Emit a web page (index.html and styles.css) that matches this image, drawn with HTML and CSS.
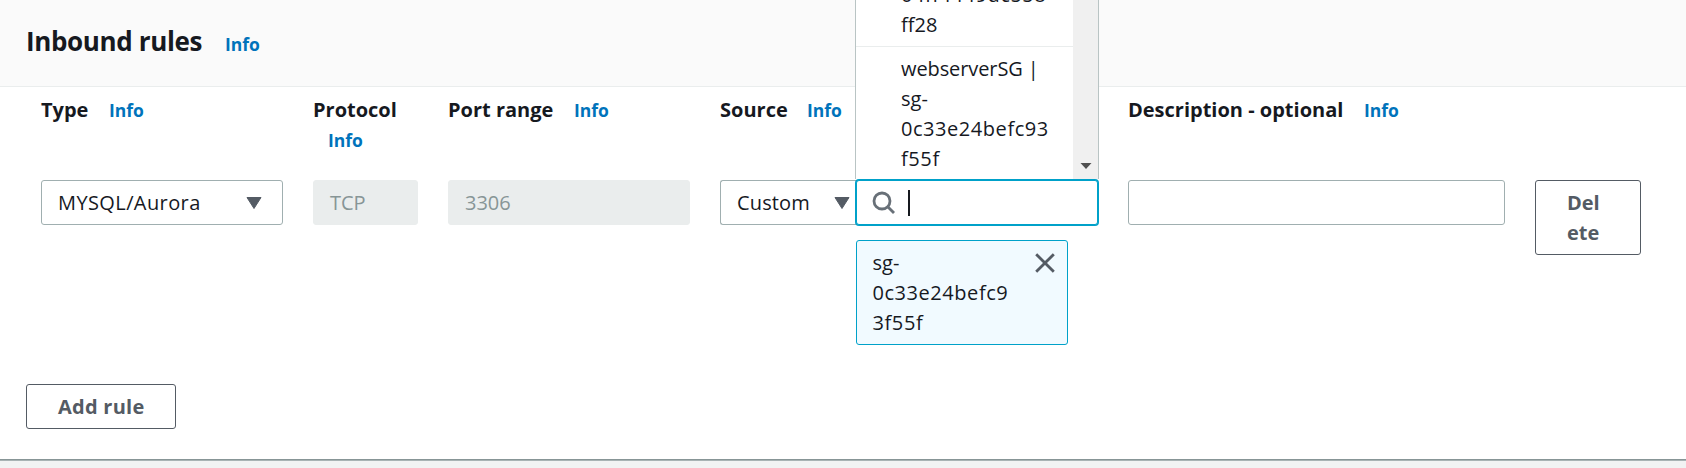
FILE: index.html
```html
<!DOCTYPE html>
<html lang="en">
<head>
<meta charset="utf-8">
<title>Inbound rules</title>
<link rel="stylesheet" href="styles.css">
</head>
<body>
<main class="panel">
  <header class="panel-header">
    <h1 class="title">Inbound rules</h1>
    <a class="info">Info</a>
  </header>
  <section class="rules">
    <div class="label type"><span class="name">Type</span><a class="info">Info</a></div>
    <div class="label protocol"><span class="name">Protocol</span><a class="info wrapped">Info</a></div>
    <div class="label port"><span class="name">Port range</span><a class="info">Info</a></div>
    <div class="label source"><span class="name">Source</span><a class="info">Info</a></div>
    <div class="label description"><span class="name">Description - optional</span><a class="info">Info</a></div>
    <div></div>

    <div class="field select"><span class="mysql">MYSQL/Aurora</span><svg class="caret" viewBox="0 0 16 12"><path d="M1 .5H15L8 11.5Z"/></svg></div>
    <div class="field disabled"><span class="tcp">TCP</span></div>
    <div class="field disabled">3306</div>
    <div class="source-group">
      <div class="field select custom"><span class="custom-text">Custom</span><svg class="caret" viewBox="0 0 16 12"><path d="M1 .5H15L8 11.5Z"/></svg></div>
      <div class="lookup">
        <div class="dropdown">
          <div class="options">
            <div class="option"><span class="line hash">04ff4449dc558</span><span class="line">ff28</span></div>
            <div class="option"><span class="line group-name">webserverSG |</span><span class="line">sg-</span><span class="line hash">0c33e24befc93</span><span class="line tail">f55f</span></div>
          </div>
          <div class="scrollbar"><svg class="scroll-arrow" viewBox="0 0 12 6"><path d="M.5 0H11.5L6 6Z"/></svg></div>
        </div>
        <div class="field search">
          <svg class="search-icon" viewBox="0 0 24 24"><circle cx="10" cy="10" r="8"/><path d="M15.500 15.500L22 22"/></svg>
          <span class="cursor"></span>
        </div>
        <div class="token">
          <div><span class="line">sg-</span><span class="line hash">0c33e24befc9</span><span class="line tail">3f55f</span></div>
          <svg class="close" viewBox="0 0 20 20"><path d="M1.200 1.200L18.800 18.800M18.800 1.200L1.200 18.800"/></svg>
        </div>
      </div>
    </div>
    <div class="field"></div>
    <button class="button delete">Del<br>ete</button>
  </section>
  <footer class="actions"><button class="button add">Add rule</button></footer>
</main>
</body>
</html>
```
FILE: styles.css
```css
* { box-sizing: border-box; }
body {
  margin: 0;
  height: 468px;
  overflow: hidden;
  background: #f2f3f3;
  color: #16191f;
  font: 20px/30px "Open Sans", "Noto Sans", sans-serif;
}
.panel {
  height: 459px;
  background: #fff;
  box-shadow: 0 1px 0 #879596, 0 2px 0 #a9b3b4;
  display: flex;
  flex-direction: column;
}
.panel-header {
  height: 87px;
  flex: none;
  padding: 23px 26px 0;
  background: #fafafa;
  border-bottom: 1px solid #eaeded;
  display: flex;
  align-items: baseline;
}
.title {
  margin: 0;
  width: 199px;
  font-size: 26px;
  line-height: 36px;
  font-weight: 700;
  letter-spacing: -.35px;
  white-space: nowrap;
}
.info {
  color: #0073bb;
  font-size: 17.5px;
  font-weight: 700;
}
.rules {
  padding: 8px 41px 0;
  display: grid;
  grid-template-columns: 242px 105px 242px 378px 377px 106px;
  grid-template-rows: 85px 75px;
  column-gap: 30px;
}
.label { white-space: nowrap; display: flex; align-items: baseline; height: 30px; }
.name { font-weight: 700; flex: none; }
.type .name { width: 68px; }
.port .name { width: 126px; }
.source .name { width: 87px; }
.description .name { width: 236px; }
.protocol { flex-wrap: wrap; }
.protocol .name { width: 105px; }
.wrapped { padding-left: 15px; }
.field {
  height: 45px;
  border: 1px solid #a0afb0;
  border-radius: 3px;
  background: #fff;
  padding: 0 16px;
  display: flex;
  align-items: center;
}
.select { justify-content: space-between; padding-right: 20px; }
.mysql { letter-spacing: .4px; }
.disabled { background: #eaeded; border-color: #eaeded; color: #879596; }
.caret { width: 16px; height: 12px; fill: #545b64; stroke: #545b64; stroke-width: 1; stroke-linejoin: round; }
.source-group { display: flex; }
.custom { width: 136px; padding-right: 6px; border-right: 0; border-radius: 3px 0 0 3px; }
.custom-text { letter-spacing: .15px; }
.lookup { position: relative; width: 242px; }
.dropdown {
  position: absolute;
  top: -180px;
  left: -1px;
  width: 244px;
  height: 179px;
  background: #fff;
  border: 1px solid #b9c4c4;
  border-width: 0 1px;
  display: flex;
  overflow: hidden;
}
.options { width: 217px; display: flex; flex-direction: column; justify-content: flex-end; }
.option { padding: 7px 0 6px 45px; }
.option:last-child { padding-bottom: 5px; }
.option + .option { border-top: 1px solid #eaeded; }
.line { display: block; white-space: nowrap; }
.hash { letter-spacing: .55px; }
.tail { letter-spacing: .6px; }
.group-name { letter-spacing: -.1px; }
.scrollbar { width: 25px; background: #f0f0f0; display: flex; align-items: flex-end; justify-content: center; padding-bottom: 10px; }
.scroll-arrow { width: 12px; height: 6px; fill: #505050; }
.search {
  position: relative;
  border-color: #00a1c9;
  box-shadow: 0 0 0 1px #00a1c9;
  padding: 0 15px;
}
.search-icon { width: 24px; height: 24px; fill: none; stroke: #687078; stroke-width: 2.800; }
.cursor { width: 2px; height: 26px; margin-left: 12px; background: #16191f; }
.token {
  width: 212px;
  height: 105px;
  margin-top: 15px;
  padding: 7px 12px 0 15.5px;
  border: 1px solid #00a1c9;
  border-radius: 3px;
  background: #f1faff;
  display: flex;
  justify-content: space-between;
}
.close { width: 20px; height: 20px; margin-top: 5px; flex: none; stroke: #545b64; stroke-width: 2.800; }
.button {
  background: #fff;
  border: 1px solid #545b64;
  border-radius: 3px;
  color: #545b64;
  font: 700 20px/30px "Open Sans", "Noto Sans", sans-serif;
  text-align: left;
}
.delete { height: 75px; padding: 0 0 0 31px; }
.actions { padding: 129px 26px 0; }
.add { display: block; width: 150px; height: 45px; padding: 0 0 0 31px; white-space: nowrap; letter-spacing: .25px; }
```
